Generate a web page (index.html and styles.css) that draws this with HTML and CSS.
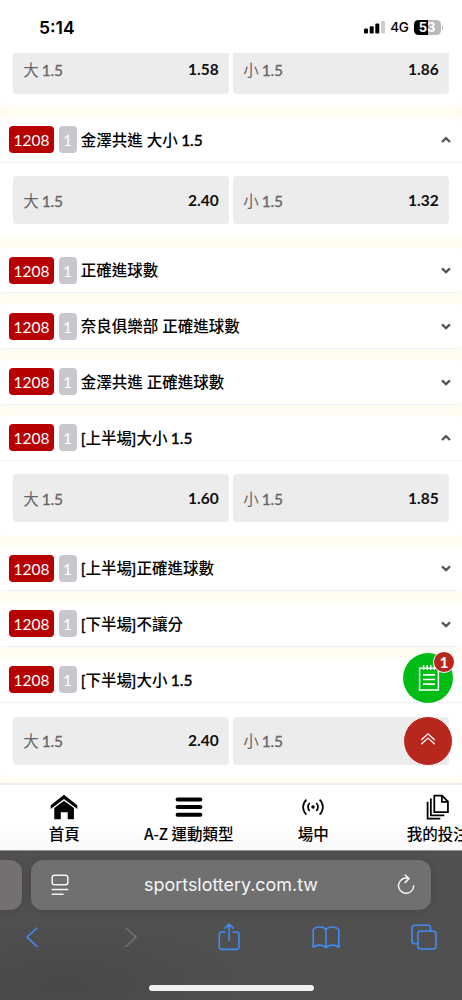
FILE: index.html
```html
<!DOCTYPE html>
<html lang="zh-Hant">
<head>
<meta charset="utf-8">
<meta name="viewport" content="width=device-width, initial-scale=1">
<title>運動彩券</title>
<link rel="stylesheet" href="styles.css">
</head>
<body>
<div class="phone">
  <header class="status">
    <span class="clock">5:14</span>
    <div class="status-right">
      <svg class="signal" width="21" height="14" viewBox="0 0 21 14"><rect x="0" y="8.5" width="4" height="5" rx="1.2"/><rect x="5.7" y="6.3" width="4" height="7.2" rx="1.2"/><rect x="11.3" y="3.6" width="4" height="9.9" rx="1.2"/><rect x="17" y="0.8" width="4" height="12.7" rx="1.2" fill="#ccc"/></svg>
      <span class="network">4G</span>
      <div class="battery"><span class="battery-body"><b>5</b><b>3</b></span><i class="battery-tip"></i></div>
    </div>
  </header>

  <main class="markets">
    <div class="list">
      <section class="card tail">
        <div class="odds"><div class="tile"><span>大 <em>1.5</em></span><b>1.58</b></div><div class="tile"><span>小 <em>1.5</em></span><b>1.86</b></div></div>
      </section>
      <section class="card">
        <div class="head"><span class="code">1208</span><span class="min">1</span><h2>金澤共進 大小 <em>1.5</em></h2><svg class="chev" viewBox="0 0 12 8"><path d="M2 6 6 2.2 10 6"/></svg></div>
        <div class="odds"><div class="tile"><span>大 <em>1.5</em></span><b>2.40</b></div><div class="tile"><span>小 <em>1.5</em></span><b>1.32</b></div></div>
      </section>
      <section class="card">
        <div class="head"><span class="code">1208</span><span class="min">1</span><h2>正確進球數</h2><svg class="chev" viewBox="0 0 12 8"><path d="M2 2.4 6 6.2 10 2.4"/></svg></div>
      </section>
      <section class="card">
        <div class="head"><span class="code">1208</span><span class="min">1</span><h2>奈良俱樂部 正確進球數</h2><svg class="chev" viewBox="0 0 12 8"><path d="M2 2.4 6 6.2 10 2.4"/></svg></div>
      </section>
      <section class="card">
        <div class="head"><span class="code">1208</span><span class="min">1</span><h2>金澤共進 正確進球數</h2><svg class="chev" viewBox="0 0 12 8"><path d="M2 2.4 6 6.2 10 2.4"/></svg></div>
      </section>
      <section class="card">
        <div class="head"><span class="code">1208</span><span class="min">1</span><h2><em>[</em>上半場<em>]</em>大小 <em>1.5</em></h2><svg class="chev" viewBox="0 0 12 8"><path d="M2 6 6 2.2 10 6"/></svg></div>
        <div class="odds"><div class="tile"><span>大 <em>1.5</em></span><b>1.60</b></div><div class="tile"><span>小 <em>1.5</em></span><b>1.85</b></div></div>
      </section>
      <section class="card">
        <div class="head"><span class="code">1208</span><span class="min">1</span><h2><em>[</em>上半場<em>]</em>正確進球數</h2><svg class="chev" viewBox="0 0 12 8"><path d="M2 2.4 6 6.2 10 2.4"/></svg></div>
      </section>
      <section class="card">
        <div class="head"><span class="code">1208</span><span class="min">1</span><h2><em>[</em>下半場<em>]</em>不讓分</h2><svg class="chev" viewBox="0 0 12 8"><path d="M2 2.4 6 6.2 10 2.4"/></svg></div>
      </section>
      <section class="card">
        <div class="head"><span class="code">1208</span><span class="min">1</span><h2><em>[</em>下半場<em>]</em>大小 <em>1.5</em></h2></div>
        <div class="odds"><div class="tile"><span>大 <em>1.5</em></span><b>2.40</b></div><div class="tile"><span>小 <em>1.5</em></span></div></div>
      </section>
    </div>

    <div class="slip">
      <svg width="22" height="28" viewBox="0 0 22 28" fill="none" stroke="#fff"><path stroke-width="1.5" d="M4.2 4.2H1.600V26H20.400V4.2H17.800"/><path stroke-width="1.4" d="M5.600 1v5M9.200 1v5M12.800 1v5M16.400 1v5M4.200 4.200H17.800"/><path stroke-width="1.7" d="M5 10.800H17M5 15.500H17M5 20.200H17"/></svg>
      <span class="slip-count">1</span>
    </div>
    <div class="to-top">
      <svg width="16" height="14" viewBox="0 0 16 14" fill="none" stroke="#fff" stroke-width="1.2"><path d="M1.2 8 8 1.800 14.800 8M1.200 12.200 8 6 14.800 12.200"/></svg>
    </div>
  </main>

  <nav class="tabs">
    <a class="tab"><svg width="28" height="26" viewBox="0 0 28 26"><path d="M.7 11.3 14 .8 27.3 11.3V15L14 4.9.7 15Z"/><path d="M4.3 14.1 14 6.7l9.9 7.4V25.2H17.7V18.3H10.8v6.9H4.3Z"/></svg><span>首頁</span></a>
    <a class="tab"><svg width="28" height="26" viewBox="0 0 28 26" stroke="#000" stroke-width="4" stroke-linecap="round"><path d="M2.6 5.5h22.8M2.6 13h22.8M2.6 20.7h22.8"/></svg><span>A-Z 運動類型</span></a>
    <a class="tab"><svg width="28" height="26" viewBox="0 0 28 26" fill="none" stroke="#000" stroke-width="1.7"><circle cx="14" cy="13" r="1.7" fill="#000" stroke="none"/><path d="M10.7 9a5.6 5.6 0 0 0 0 8M17.3 9a5.6 5.6 0 0 1 0 8M7.4 5.500a10.200 10.200 0 0 0 0 15M20.600 5.500a10.200 10.200 0 0 1 0 15"/></svg><span>場中</span></a>
    <a class="tab"><svg width="28" height="28" viewBox="0 0 28 28" fill="none" stroke="#000" stroke-width="1.9"><path d="M10 1.800h8.400l6.300 6.400v11.300H10ZM18.200 2v6.400h6.400M6.300 4.800v18.100H20.800M2.800 8.400v18.100H16.500"/></svg><span>我的投注</span></a>
  </nav>

  <footer class="browser">
    <div class="address-row">
      <div class="prev-page"></div>
      <div class="address">
        <svg width="18" height="22" viewBox="0 0 18 22" fill="none" stroke="#f4f4f4" stroke-width="1.5" stroke-linecap="round"><rect x="1.200" y="1.200" width="15.600" height="9.600" rx="2.200"/><path d="M1.200 15.500h15.600M1.200 20.200H12"/></svg>
        <span class="domain">sportslottery.com.tw</span>
        <svg width="18" height="22" viewBox="0 0 18 22" fill="none" stroke="#f4f4f4" stroke-width="1.5" stroke-linecap="round" stroke-linejoin="round"><path d="M11.500 4.400A7.600 7.600 0 1 0 16.700 12M8.200 1 12 4.600 8.200 8.400"/></svg>
      </div>
    </div>
    <div class="tools">
      <svg width="28" height="28" viewBox="0 0 28 28"><path d="M18 5 8 14.200 18 23.500"/></svg>
      <svg class="off" width="28" height="28" viewBox="0 0 28 28"><path d="M9 5 19 14.200 9 23.500"/></svg>
      <svg width="28" height="28" viewBox="0 0 28 28"><path d="M10 9H6.700A2.400 2.400 0 0 0 4.300 11.400V24a2.400 2.400 0 0 0 2.400 2.400H21.600A2.400 2.400 0 0 0 24 24V11.400A2.400 2.400 0 0 0 21.600 9H18M14.100 17.500V1.300M9.900 5.300 14.100 1.100 18.300 5.300"/></svg>
      <svg width="28" height="28" viewBox="0 0 28 28"><path d="M14 6.500C11 3 4 3.400 1.200 6.500V24.300C4.500 21.500 11 21.300 14 24.600C17 21.300 23.500 21.500 26.800 24.300V6.500C24 3.400 17 3 14 6.500V24.500"/></svg>
      <svg width="28" height="28" viewBox="0 0 28 28"><path d="M7.800 20.800H4.700A2.700 2.700 0 0 1 2 18.100V5A2.700 2.700 0 0 1 4.700 2.300H17.800A2.700 2.700 0 0 1 20.500 5V7.800"/><rect x="7.900" y="8" width="18" height="18" rx="2.700"/></svg>
    </div>
    <div class="home-bar"></div>
  </footer>
</div>
</body>
</html>
```
FILE: styles.css
```css
* { box-sizing: border-box; }
body { margin: 0; }
svg { display: block; flex: none; }

.phone {
  display: flex;
  flex-direction: column;
  width: 462px;
  height: 1000px;
  overflow: hidden;
  background: #fff;
  color: #111;
  font-family: Lato, "Noto Sans CJK TC", sans-serif;
  font-size: 15.5px;
}

/* Status bar */
.status {
  display: flex;
  justify-content: space-between;
  height: 53px;
  padding: 1.500px 19px 0 39px;
  align-items: center;
  font-family: Inter, sans-serif;
  color: #000;
}
.clock { font-size: 17.5px; font-weight: 600; }
.status-right { display: flex; align-items: center; }
.network { margin-left: 5px; font-size: 13.5px; font-weight: 500; letter-spacing: -.3px; }
.battery { display: flex; align-items: center; gap: 1px; margin-left: 5px; }
.battery-body {
  display: flex;
  justify-content: center;
  width: 27px;
  height: 15px;
  border-radius: 4.5px;
  background: linear-gradient(90deg, #000 53%, #b9b9b9 53%);
  color: #fff;
  font-size: 13px;
  line-height: 15px;
}
.battery-tip { width: 1.5px; height: 5px; border-radius: 0 2px 2px 0; background: #b9b9b9; }

/* Betting markets */
.markets {
  position: relative;
  height: 730px;
  overflow: hidden;
  background: #fffcf2;
}
.list { display: flex; flex-direction: column; gap: 10.4px; margin-top: -21px; }
.card { flex: none; border-radius: 5px; background: #fff; overflow: hidden; }
.head {
  display: flex;
  align-items: center;
  height: 45.35px;
  padding: 0 10px 0 9px;
  border-bottom: 1px solid #eeeef6;
}
.code, .min {
  height: 27px;
  border-radius: 4px;
  color: #fff;
  line-height: 28px;
  text-align: center;
}
.code { width: 45px; background: #b70000; }
.min { width: 18px; margin-left: 4.5px; background: #c8c7ce; }
h2 {
  margin: 0 auto 0 4.300px;
  color: #000;
  font-size: 15.5px;
  font-weight: 500;
  line-height: 24px;
  white-space: nowrap;
}
em { font-style: normal; -webkit-text-stroke: .3px currentColor; }
h2 em, .tile em { margin-left: -.5px; }
h2 em:first-child:not(:last-child) { margin-left: 0; }
.chev {
  width: 12px;
  height: 8px;
  fill: none;
  stroke: #555;
  stroke-width: 2.3;
}
.odds {
  display: grid;
  grid-template-columns: 1fr 1fr;
  gap: 4.5px;
  height: 75px;
  padding: 13.7px 13.3px 13.3px;
}
.tile {
  display: flex;
  align-items: center;
  justify-content: space-between;
  padding: 0 10px 1.500px;
  border-radius: 4px;
  background: #ececec;
}
.tile span { color: #666; font-weight: 400; }
.tile em { margin-left: -1px; letter-spacing: -.2px; }
.tile b { color: #111; font-weight: 700; }

/* Floating buttons over the list */
.slip, .to-top {
  position: absolute;
  display: flex;
  align-items: center;
  justify-content: center;
  border-radius: 50%;
}
.slip { top: 600px; left: 403px; width: 50px; height: 50px; background: #00bd16; padding-left: 2px; }
.slip-count {
  position: absolute;
  top: -2px;
  right: -2px;
  width: 22px;
  height: 22px;
  border: 1px solid #fff;
  border-radius: 50%;
  background: #b8271d;
  color: #fff;
  font-weight: 700;
  line-height: 20px;
  text-align: center;
}
.to-top { top: 662.500px; left: 403px; width: 50px; height: 50px; border: 1px solid #fff; background: #b8271d; padding-bottom: 4px; }

/* Site tab bar */
.tabs {
  display: flex;
  flex: none;
  width: 500px;
  height: 67px;
  padding-left: 2px;
  border-top: 2px solid #eee;
  background: linear-gradient(#fff 60%, #f9f9f9);
  color: #000;
  font-family: "Noto Sans CJK TC", sans-serif;
  font-weight: 500;
}
.tab { display: flex; flex-direction: column; align-items: center; flex: none; width: 124.5px; padding-top: 8.500px; }
.tab svg { height: 26px; }
.tab span { line-height: 24px; margin-top: 1px; white-space: nowrap; }

/* Browser chrome */
.browser {
  flex: 1;
  padding-top: 8.500px;
  border-top: 1px solid #929292;
  background: radial-gradient(ellipse at 14% 90%, #484848, transparent 35%), linear-gradient(#525050, #505050);
}
.address-row { display: flex; gap: 9px; }
.prev-page, .address { height: 50px; background: #707070; box-shadow: 0 0 10px rgba(0, 0, 0, .13); }
.prev-page { width: 22px; border-radius: 0 12px 12px 0; background: #746f70; }
.address {
  display: flex;
  align-items: center;
  justify-content: space-between;
  width: 400px;
  padding: 0 16px 0 20px;
  border-radius: 12px;
}
.domain { margin-right: 4px; color: #f5f5f5; font-family: Inter, sans-serif; font-size: 17.900px; }
.tools {
  display: flex;
  justify-content: space-between;
  margin-top: 13.500px;
  padding: 0 24px 0 19px;
  fill: none;
  stroke: #408cf4;
  stroke-width: 1.6;
  stroke-linecap: round;
  stroke-linejoin: round;
}
.off { stroke: #707070; }
.home-bar { width: 165px; height: 6px; margin: 34px 0 0 148.5px; border-radius: 3px; background: #f0f0f0; }
```
